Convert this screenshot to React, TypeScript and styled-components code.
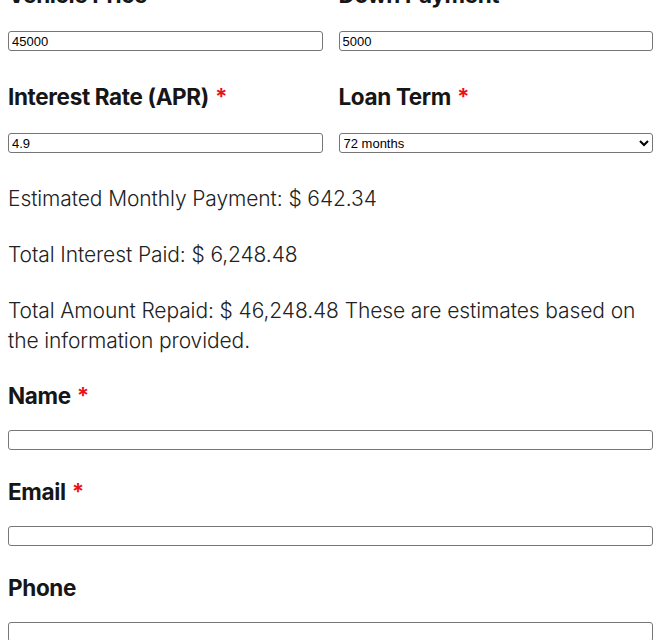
import React from "react";
import styled, { createGlobalStyle } from "styled-components";

const Global = createGlobalStyle`
  html, body { margin: 0; padding: 0; background: #fff; }
  body { font-family: Inter, "Noto Sans", sans-serif; color: #222; overflow: hidden; }
`;

const Page = styled.div`
  padding: 0 8px;
  width: 645px;
`;

const Form = styled.form`
  display: flex;
  flex-direction: column;
  margin-top: -20px;
`;

const Row = styled.div`
  display: grid;
  grid-template-columns: 1fr 1fr;
  column-gap: 16px;
`;

const Field = styled.div<{ $labelGap: number; $after: number }>`
  display: flex;
  flex-direction: column;
  gap: ${(p) => p.$labelGap}px;
  padding-bottom: ${(p) => p.$after}px;
`;

const Label = styled.label`
  font-family: Inter, sans-serif;
  font-weight: 700;
  font-size: 22.5px;
  line-height: 30px;
  letter-spacing: -0.35px;
  color: #161616;
`;

const Req = styled.span`
  color: #e8121b;
  margin-left: 6px;
`;

const Input = styled.input`
  width: 100%;
  box-sizing: border-box;
  font-family: "Liberation Sans", Arial, sans-serif;
  font-size: 13px;
  height: 20px;
  padding: 1px 3px;
  border: 1px solid #767676;
  border-radius: 3px;
  color: #000;
  background: #fff;
`;

const Select = styled.select`
  width: 100%;
  box-sizing: border-box;
  font-family: "Liberation Sans", Arial, sans-serif;
  font-size: 13px;
  height: 20px;
  border: 1px solid #767676;
  border-radius: 3px;
  color: #000;
  background: #fff;
`;

const Results = styled.div`
  display: flex;
  flex-direction: column;
  gap: 26px;
  padding: 0 0 25px;
`;

const Para = styled.p`
  margin: 0;
  font-family: Inter, sans-serif;
  font-weight: 300;
  font-size: 21px;
  line-height: 30px;
  color: #222;
  letter-spacing: -0.1px;
`;

export default function App() {
  return (
    <>
      <Global />
      <Page>
        <Form onSubmit={(e) => e.preventDefault()}>
          <Row>
            <Field $labelGap={21} $after={31}>
              <Label>Vehicle Price</Label>
              <Input defaultValue="45000" />
            </Field>
            <Field $labelGap={21} $after={31}>
              <Label>Down Payment</Label>
              <Input defaultValue="5000" />
            </Field>
          </Row>
          <Row>
            <Field $labelGap={21} $after={31}>
              <Label>
                Interest Rate (APR)<Req>*</Req>
              </Label>
              <Input defaultValue="4.9" />
            </Field>
            <Field $labelGap={21} $after={31}>
              <Label>
                Loan Term<Req>*</Req>
              </Label>
              <Select defaultValue="72">
                <option value="36">36 months</option>
                <option value="48">48 months</option>
                <option value="60">60 months</option>
                <option value="72">72 months</option>
              </Select>
            </Field>
          </Row>
          <Results>
            <Para>Estimated Monthly Payment: $ 642.34</Para>
            <Para>Total Interest Paid: $ 6,248.48</Para>
            <Para>
              Total Amount Repaid: $ 46,248.48 These are estimates based on the
              information provided.
            </Para>
          </Results>
          <Field $labelGap={19} $after={27}>
            <Label>
              Name<Req>*</Req>
            </Label>
            <Input />
          </Field>
          <Field $labelGap={19} $after={27}>
            <Label>
              Email<Req>*</Req>
            </Label>
            <Input />
          </Field>
          <Field $labelGap={19} $after={27}>
            <Label>Phone</Label>
            <Input />
          </Field>
        </Form>
      </Page>
    </>
  );
}
